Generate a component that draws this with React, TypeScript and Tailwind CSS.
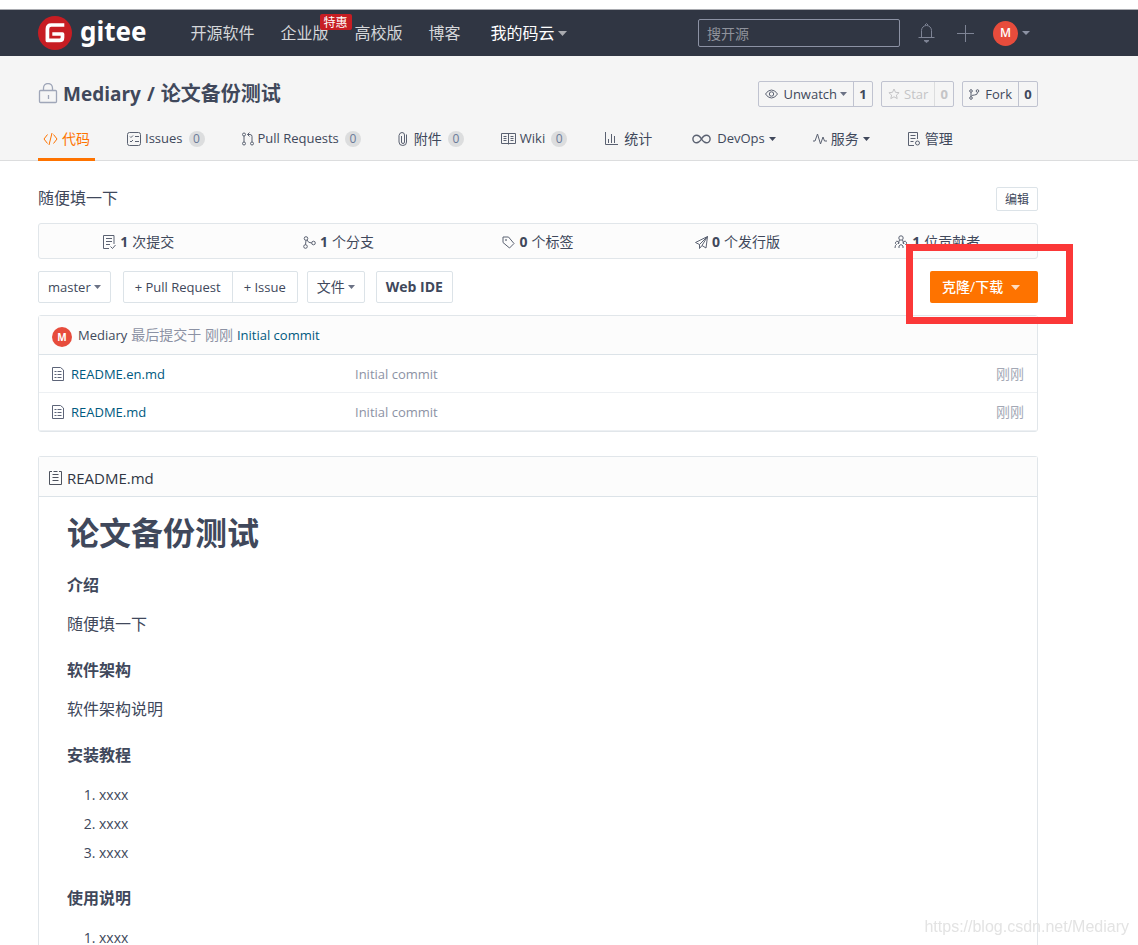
import React from "react";

type IconProps = {
  w: number;
  h: number;
  className?: string;
  children: React.ReactNode;
};

const Icon: React.FC<IconProps> = ({ w, h, className = "opacity-85", children }) => (
  <svg
    width={w}
    height={h}
    viewBox={`0 0 ${w} ${h}`}
    fill="none"
    stroke="currentColor"
    strokeWidth="1"
    aria-hidden="true"
    className={`shrink-0 ${className}`}
  >
    {children}
  </svg>
);

const Caret = ({ className = "h-1 w-[7px]" }: { className?: string }) => (
  <svg viewBox="0 0 8 4" preserveAspectRatio="none" aria-hidden="true" className={`shrink-0 ${className}`}>
    <path d="M0 0h8L4 4z" fill="currentColor" />
  </svg>
);

const GiteeMark = () => (
  <svg width="34" height="34" viewBox="0 0 34 34" aria-hidden="true">
    <circle cx="17" cy="17" r="17" fill="#c71d23" />
    <path
      d="M26.3 9H13.3Q9.4 9 9.4 13V24.4H21.5Q24.5 24.4 24.5 21.4V18H14.3"
      fill="none"
      stroke="#fff"
      strokeWidth="3.7"
      strokeLinejoin="round"
    />
  </svg>
);

const CodeIcon = () => (
  <Icon w={15} h={14} className="">
    <path d="M4.5 2.5L1 7l3.5 4.5M10.5 2.5L14 7l-3.5 4.5M9 1L6 13" />
  </Icon>
);

const IssuesIcon = () => (
  <Icon w={14} h={14}>
    <rect x="0.5" y="0.5" width="13" height="13" rx="2" />
    <path d="M3 4.5l1 1 2-2M3 9l1 1 2-2M8 4.5h4M8 9.5h4" />
  </Icon>
);

const PullIcon = () => (
  <Icon w={12} h={14}>
    <circle cx="2" cy="2.5" r="1.5" />
    <circle cx="2" cy="11.5" r="1.5" />
    <circle cx="10" cy="11.5" r="1.5" />
    <path d="M2 4v6M10 10V4.5q0-2-2-2H5.5M7.500 0.500l-2 2 2 2" />
  </Icon>
);

const ClipIcon = () => (
  <Icon w={10} h={14}>
    <path d="M3.5 4v6q0 1.5 1.5 1.5T6.5 10V3Q6.5 0.5 4 0.5T1 3.5V10q0 3.5 3.8 3.5T8.5 10V2.5" />
  </Icon>
);

const WikiIcon = () => (
  <Icon w={15} h={12}>
    <path d="M0.5 0.5H14.5V10.5H0.5zM7.5 0.5v11M2.5 3.5h3M2.5 5.5h3M2.5 7.5h3M9.5 3.5h3M9.5 5.5h3M9.5 7.5h3" />
  </Icon>
);

const ChartIcon = () => (
  <Icon w={13} h={13}>
    <path d="M0.5 0v12.5H13M3.5 7v4M6.5 2v9M9.5 4v7" />
  </Icon>
);

const InfinityIcon = () => (
  <Icon w={19} h={10}>
    <path
      d="M9.5 5C8 2.5 6.5 1.2 4.7 1.2a3.8 3.8 0 0 0 0 7.6C6.5 8.8 8 7.5 9.5 5s3-3.8 4.8-3.8a3.8 3.8 0 0 1 0 7.6C12.5 8.8 11 7.5 9.5 5z"
      strokeWidth="1.4"
    />
  </Icon>
);

const PulseIcon = () => (
  <Icon w={14} h={12}>
    <path d="M0 8h2l2.5-7 3 10 2.5-7 1.5 4H14" />
  </Icon>
);

const ManageIcon = () => (
  <Icon w={14} h={14}>
    <path d="M7 13.5H1.5V0.5h9V7M3.5 3.5h5M3.5 6.5h5M3.5 9.5h3" />
    <circle cx="10.5" cy="11" r="2" />
  </Icon>
);

const CommitIcon = () => (
  <Icon w={13} h={14}>
    <path d="M6 13.5H0.5V0.5h10.5V9M3 3.5h6M3 6.5h6M3 9.5h4M7.5 11.5l2 2 3-3.5" />
  </Icon>
);

const BranchIcon = () => (
  <Icon w={13} h={13}>
    <circle cx="3" cy="2.5" r="1.8" />
    <circle cx="2.5" cy="10.5" r="1.8" />
    <circle cx="10.5" cy="7" r="1.8" />
    <path d="M3 4.3L2.5 8.7M4 4q1 3 4.7 3" />
  </Icon>
);

const TagIcon = () => (
  <Icon w={13} h={13}>
    <path d="M1 1h5.5L12 7.5 7.5 12 1 6.5z" strokeLinejoin="round" />
    <circle cx="4" cy="4" r="0.5" />
  </Icon>
);

const PlaneIcon = () => (
  <Icon w={13} h={13}>
    <path d="M12.5 0.5L0.5 6.500l4 2 8-8L11 12l-4-2.500-2.500 3v-4M12.500 0.500L7 9.500" strokeLinejoin="round" />
  </Icon>
);

const PeopleIcon = () => (
  <Icon w={14} h={14}>
    <circle cx="7" cy="3" r="2.2" />
    <path d="M5.5 5L4 9M8.5 5l1.5 4M5 13v-2l2-1.5L9 11v2M1 13q0-3 1.5-3.5A1.7 1.7 0 1 1 4.5 9M13 13q0-3-1.5-3.5A1.7 1.7 0 1 0 9.5 9" />
  </Icon>
);

const EyeIcon = () => (
  <Icon w={13} h={10}>
    <path d="M0.5 5Q3 1 6.5 1t6 4Q10 9 6.5 9t-6-4z" />
    <circle cx="6.5" cy="5" r="2.2" />
  </Icon>
);

const StarIcon = () => (
  <Icon w={12} h={12} className="">
    <path d="M6 1l1.5 3.3 3.6.4-2.7 2.4.8 3.5L6 8.800l-3.200 1.800.8-3.500L.9 4.700l3.600-.4z" />
  </Icon>
);

const ForkIcon = () => (
  <Icon w={11} h={11}>
    <circle cx="2" cy="2" r="1.3" />
    <circle cx="2" cy="9" r="1.3" />
    <circle cx="8.5" cy="2" r="1.3" />
    <path d="M2 3.5v4M8.5 3.5q0 2.5-3 2.5T2 7.5" />
  </Icon>
);

const FileIcon = () => (
  <Icon w={12} h={14} className="text-[#5d6478]">
    <path d="M0.5 0.5H8.5L11.5 3V13.5H0.5zM2.5 4.5h2M5.5 4.5h4M2.5 7.5h2M5.5 7.5h4M2.5 10.5h2M5.5 10.5h4" />
  </Icon>
);

const DocIcon = () => (
  <Icon w={13} h={14}>
    <path d="M3 0.5H0.5V13.5H12.5V0.5H10M4.5 0.5h4M3.5 3.5h6M3.5 6.5h6M3.5 9.5h6" />
  </Icon>
);

// Latin text is set one step smaller than the Chinese beside it
const En = ({ children }: { children: React.ReactNode }) => (
  <span className="text-[13px]">{children}</span>
);

const Count = () => (
  <span className="ml-[2px] flex h-4 w-4 items-center justify-center rounded-full bg-[#dcddde] text-xs text-[#6a7a99]">
    0
  </span>
);

const Tab = ({ active, children }: { active?: boolean; children: React.ReactNode }) => (
  <a
    href="#"
    className={
      active
        ? "flex h-11 items-center gap-1 border-b-3 border-[#fe7300] px-[5px] pt-[2px] text-[#fe7300]"
        : "flex h-11 items-center gap-1 border-b-3 border-transparent px-[5px] pt-[2px]"
    }
  >
    {children}
  </a>
);

const navLink = "text-[#d5d7da]";
const toolButton = "flex h-8 items-center rounded-xs border border-[#dce3e8] bg-white px-[9px]";
const grayCaret = "ml-[3px] h-1 w-[7px] text-[#6b7285]";
const countLink = "flex w-[19px] items-center justify-center border-l font-bold";

const TopBar = () => (
  <header className="mt-[9px] border-t border-[#a9abb0] bg-[#303643]">
    <div className="ml-[38px] flex h-[46px] w-full max-w-[1000px] items-center text-base">
      <a href="#" className="flex items-center gap-2 text-white">
        <GiteeMark />
        <span className="mb-1 font-['Noto_Sans'] text-[26px] leading-8 font-bold">gitee</span>
      </a>
      <nav className="ml-11 flex gap-[26px]">
        <a href="#" className={navLink}>开源软件</a>
        <a href="#" className={`relative ${navLink}`}>
          企业版
          <span className="absolute -top-[7px] left-[39px] h-4 rounded-xs bg-[#c71d23] px-1 text-xs leading-[18px] whitespace-nowrap text-white">
            特惠
          </span>
        </a>
        <a href="#" className={navLink}>高校版</a>
        <a href="#" className={navLink}>博客</a>
        <button type="button" className="ml-1 flex items-center gap-[3px] text-white">
          我的码云
          <Caret className="h-[5px] w-[9px] text-[#a9abb0]" />
        </button>
      </nav>
      <div className="ml-auto flex items-center">
        <input
          type="text"
          aria-label="搜开源"
          placeholder="搜开源"
          className="h-7 w-[202px] rounded-xs border border-[#8c92a4] bg-transparent px-2 text-sm text-white placeholder:text-[#8f939c]"
        />
        <button type="button" aria-label="通知" className="ml-[18px] text-[#8c92a4]">
          <Icon w={17} h={20}>
            <path d="M0.5 14.5h16M3.5 14.5V7.5a5 5 0 0 1 10 0v7M7 2l1.5-1.5L10 2" />
            <path d="M6 17.5h5l-2.5 2z" fill="currentColor" />
          </Icon>
        </button>
        <button type="button" aria-label="新建" className="ml-[22px] text-[#8c92a4]">
          <Icon w={17} h={17}>
            <path d="M8.5 0v17M0 8.5h17" />
          </Icon>
        </button>
        <button type="button" aria-label="账户" className="mr-2 ml-[19px] flex items-center gap-1 text-[#8c92a4]">
          <span className="flex h-[25px] w-[25px] items-center justify-center rounded-full bg-[#e74c3c] text-xs font-semibold text-white">
            M
          </span>
          <Caret className="h-1 w-2" />
        </button>
      </div>
    </div>
  </header>
);

const RepoHeader = () => (
  <div className="border-b border-[#dcddde] bg-[#f5f5f5]">
    <div className="ml-[38px] w-full max-w-[1000px]">
      <div className="flex items-center pt-[25px]">
        <Icon w={20} h={22} className="text-[#9fa6b8]">
          <rect x="1.5" y="7.5" width="17" height="12" rx="1" strokeWidth="1.3" />
          <path d="M5.5 7.5V5a4.5 4.5 0 0 1 9 0v2.500M10.500 12v4" strokeWidth="1.3" />
        </Icon>
        <h1 className="ml-[5px] flex items-baseline gap-[6px] text-xl leading-[26px] font-bold">
          <a href="#" className="text-[19px]">Mediary</a>
          <span className="text-[19px]">/</span>
          <a href="#">论文备份测试</a>
        </h1>
        <div className="ml-auto flex gap-2 text-[13px]">
          <div className="flex h-[26px] rounded-xs border border-[#c0c3d0]">
            <button type="button" className="flex items-center px-[6px]">
              <EyeIcon />
              <span className="ml-[5px]">Unwatch</span>
              <Caret className={grayCaret} />
            </button>
            <a href="#" className={`border-[#c0c3d0] ${countLink}`}>1</a>
          </div>
          <div className="flex h-[26px] rounded-xs border border-[#c0c3d0] text-[#c4c4c6]">
            <button type="button" className="flex items-center gap-1 px-[6px]">
              <StarIcon />
              Star
            </button>
            <a href="#" className={`border-[#dcddde] ${countLink}`}>0</a>
          </div>
          <div className="flex h-[26px] rounded-xs border border-[#c0c3d0]">
            <button type="button" className="flex items-center gap-[5px] px-[6px]">
              <ForkIcon />
              Fork
            </button>
            <a href="#" className={`border-[#c0c3d0] ${countLink}`}>0</a>
          </div>
        </div>
      </div>
      <nav className="-mb-px flex gap-[27px] pt-[10px]">
        <Tab active><CodeIcon />代码</Tab>
        <Tab><IssuesIcon /><En>Issues</En><Count /></Tab>
        <Tab><PullIcon /><En>Pull Requests</En><Count /></Tab>
        <Tab>
          <span className="flex items-center gap-[6px]"><ClipIcon />附件</span>
          <Count />
        </Tab>
        <Tab><WikiIcon /><En>Wiki</En><Count /></Tab>
        <Tab>
          <span className="flex items-center gap-[6px] px-px"><ChartIcon />统计</span>
        </Tab>
        <Tab>
          <span className="flex items-center gap-[6px] pl-[2px]"><InfinityIcon /><En>DevOps</En></span>
          <Caret />
        </Tab>
        <Tab><PulseIcon />服务<Caret /></Tab>
        <Tab><ManageIcon />管理</Tab>
      </nav>
    </div>
  </div>
);

const stats = [
  { icon: <CommitIcon />, count: 1, label: "次提交" },
  { icon: <BranchIcon />, count: 1, label: "个分支" },
  { icon: <TagIcon />, count: 0, label: "个标签" },
  { icon: <PlaneIcon />, count: 0, label: "个发行版" },
  { icon: <PeopleIcon />, count: 1, label: "位贡献者" },
];

const files = ["README.en.md", "README.md"];

const Toolbar = () => (
  <div className="mt-3 flex items-center">
    <button type="button" className={toolButton}>
      <En>master</En>
      <Caret className={grayCaret} />
    </button>
    <div className="ml-3 flex h-8 rounded-xs border border-[#dce3e8] text-[13px]">
      <a href="#" className="flex items-center px-[11px]">+ Pull Request</a>
      <a href="#" className="flex items-center border-l border-[#dce3e8] px-[11px]">+ Issue</a>
    </div>
    <button type="button" className={`ml-[9px] ${toolButton}`}>
      文件
      <Caret className={grayCaret} />
    </button>
    <button type="button" className={`ml-[11px] font-bold ${toolButton}`}>
      Web IDE
    </button>
    <div className="relative ml-auto">
      <button
        type="button"
        className="flex h-8 w-[108px] items-center gap-2 rounded-xs bg-[#fe7300] pl-3 font-medium text-white"
      >
        克隆/下载
        <Caret className="h-[5px] w-[9px] text-[#ffdcc0]" />
      </button>
      <div className="pointer-events-none absolute -top-[27px] -right-[35px] -bottom-[21px] -left-6 border-7 border-[#fb3838]" />
    </div>
  </div>
);

const FileList = () => (
  <section className="mt-3 rounded-[3px] border border-[#e1e6ea]">
    <div className="flex h-[39px] items-center border-b border-[#dce3e8] bg-[#fcfcfc] px-[13px]">
      <span className="mt-[3px] mr-[6px] flex h-5 w-5 items-center justify-center rounded-full bg-[#e74c3c] pt-[2px] text-[10px] font-bold text-white">
        M
      </span>
      <a href="#"><En>Mediary</En></a>
      <span className="mx-1 text-[#8c92a4]">最后提交于 刚刚</span>
      <a href="#" className="text-[#005980]"><En>Initial commit</En></a>
    </div>
    <table className="w-full table-fixed border-separate border-spacing-0">
      <tbody>
        {files.map((name) => (
          <tr key={name} className="h-[38px]">
            <td className="w-[316px] border-b border-[#edf0f3] pt-px pl-[13px]">
              <a href="#" className="flex items-center gap-[7px] text-[#005980]">
                <FileIcon />
                <En>{name}</En>
              </a>
            </td>
            <td className="border-b border-[#edf0f3] text-[#8c92a4]"><En>Initial commit</En></td>
            <td className="w-24 border-b border-[#edf0f3] pr-[13px] text-right text-[#a3a8b5]">刚刚</td>
          </tr>
        ))}
      </tbody>
    </table>
  </section>
);

const heading = "mb-[15px] font-bold";

const Readme = () => (
  <section className="mt-6 flex-1 rounded-t-[3px] border border-b-0 border-[#e1e6ea] text-base leading-6">
    <div className="flex h-10 items-center gap-[5px] border-b border-[#dce3e8] bg-[#fcfcfc] px-[10px] pt-[2px] text-[15px] text-[#303643]">
      <DocIcon />
      README.md
    </div>
    <article className="px-7 pt-4">
      <h1 className="mb-5 text-[32px] leading-10 font-bold">论文备份测试</h1>
      <h4 className={heading}>介绍</h4>
      <p className="mb-[22px]">随便填一下</p>
      <h4 className={heading}>软件架构</h4>
      <p className="mb-[22px]">软件架构说明</p>
      <h4 className={heading}>安装教程</h4>
      <ol className="mb-[21px] list-decimal space-y-[5px] pt-px pl-8 text-sm leading-6">
        <li>xxxx</li>
        <li>xxxx</li>
        <li>xxxx</li>
      </ol>
      <h4 className={heading}>使用说明</h4>
      <ol className="list-decimal pt-px pl-8 text-sm leading-6">
        <li>xxxx</li>
      </ol>
    </article>
  </section>
);

export default function App() {
  return (
    <div className="flex min-h-screen flex-col bg-white font-['Open_Sans','Noto_Sans_CJK_SC',sans-serif] text-sm text-[#40485b]">
      <TopBar />
      <RepoHeader />
      <main className="ml-[38px] flex w-full max-w-[1000px] flex-1 flex-col pt-[26px]">
        <div className="flex items-start justify-between">
          <p className="text-base leading-[22px]">随便填一下</p>
          <button type="button" className="h-6 rounded-xs border border-[#dce3e8] px-2 pt-[2px] text-xs">
            编辑
          </button>
        </div>
        <ul className="mt-3 grid h-9 grid-cols-5 items-center rounded-[3px] border border-[#e1e6ea] bg-[#fcfcfc] pt-[2px]">
          {stats.map(({ icon, count, label }) => (
            <li key={label}>
              <a href="#" className="flex items-center justify-center gap-1">
                {icon}
                <b>{count}</b>
                {label}
              </a>
            </li>
          ))}
        </ul>
        <Toolbar />
        <FileList />
        <Readme />
      </main>
      <div className="pointer-events-none fixed right-[9px] bottom-[6px] font-['Liberation_Sans',sans-serif] text-base text-[#e3e3e3]">
        https://blog.csdn.net/Mediary
      </div>
    </div>
  );
}
